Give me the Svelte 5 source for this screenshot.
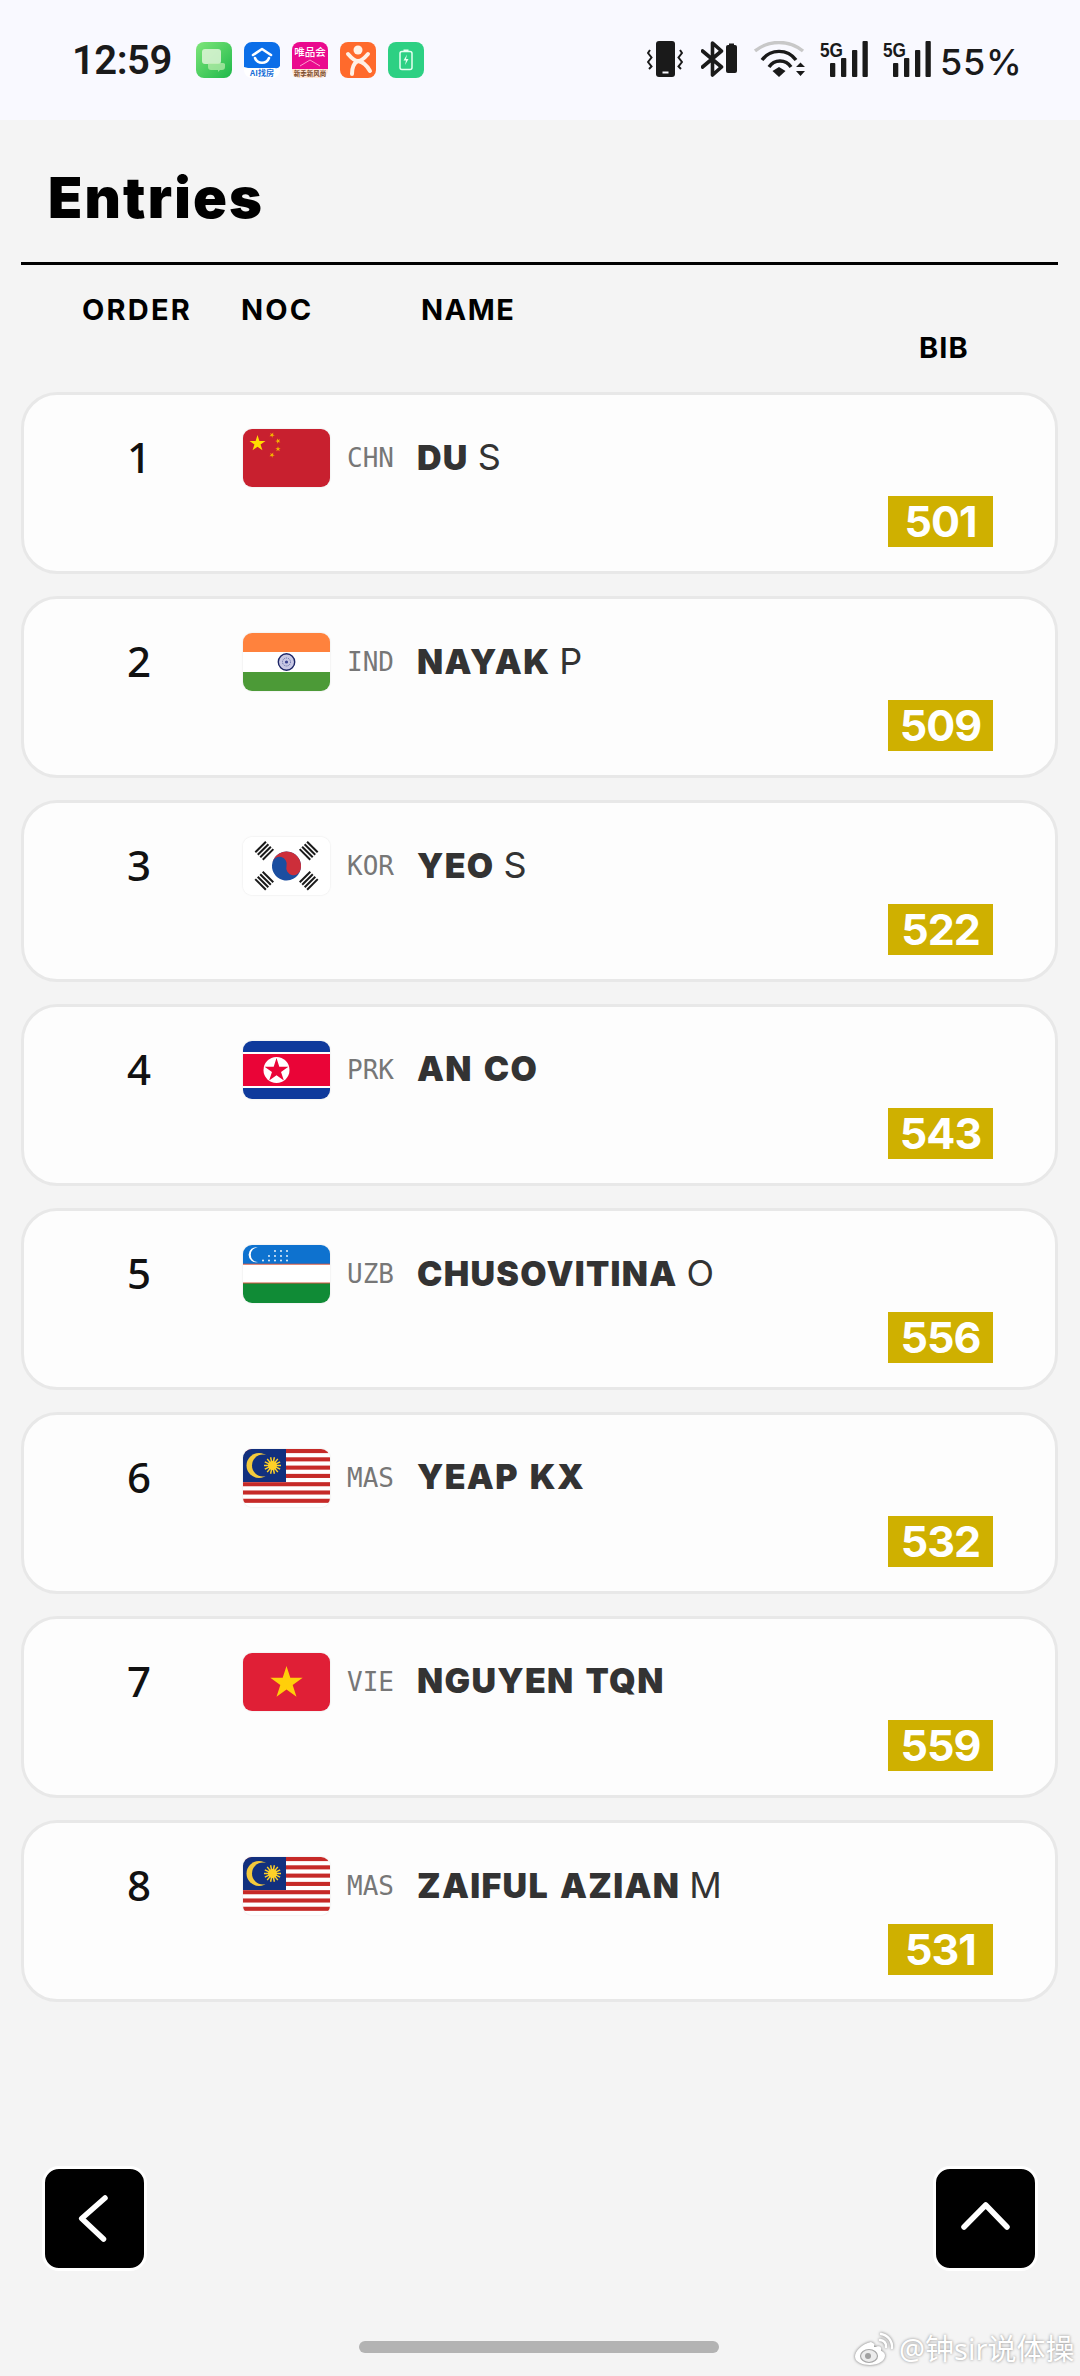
<script>
  const entries = [
    { n: 1, flag: 'chn', code: 'CHN', last: 'DU', first: 'S', bib: 501 },
    { n: 2, flag: 'ind', code: 'IND', last: 'NAYAK', first: 'P', bib: 509 },
    { n: 3, flag: 'kor', code: 'KOR', last: 'YEO', first: 'S', bib: 522 },
    { n: 4, flag: 'prk', code: 'PRK', last: 'AN CO', first: '', bib: 543 },
    { n: 5, flag: 'uzb', code: 'UZB', last: 'CHUSOVITINA', first: 'O', bib: 556 },
    { n: 6, flag: 'mas', code: 'MAS', last: 'YEAP KX', first: '', bib: 532 },
    { n: 7, flag: 'vie', code: 'VIE', last: 'NGUYEN TQN', first: '', bib: 559 },
    { n: 8, flag: 'mas', code: 'MAS', last: 'ZAIFUL AZIAN', first: 'M', bib: 531 }
  ];

  function star(cx, cy, r, rot = 0) {
    const pts = [];
    for (let i = 0; i < 10; i++) {
      const rad = i % 2 === 0 ? r : r * 0.382;
      const a = -Math.PI / 2 + (i * Math.PI) / 5 + rot;
      pts.push(`${(cx + rad * Math.cos(a)).toFixed(2)},${(cy + rad * Math.sin(a)).toFixed(2)}`);
    }
    return pts.join(' ');
  }

  const malaysiaStripes = Array.from({ length: 7 }, (_, i) => i * 8.29);
  const sunRays = Array.from({ length: 14 }, (_, i) => (i * Math.PI) / 7);
  const uzbStars = [
    [28, 6], [34, 6], [40, 6],
    [22, 11], [28, 11], [34, 11], [40, 11],
    [16, 15.5], [22, 15.5], [28, 15.5], [34, 15.5], [40, 15.5]
  ];
  const trigrams = [
    { cx: 21.3, cy: 13.7, rot: -45 },
    { cx: 65.7, cy: 13.7, rot: 45 },
    { cx: 21.3, cy: 43.7, rot: 45 },
    { cx: 65.7, cy: 43.7, rot: -45 }
  ];
</script>

{#snippet flagArt(kind)}
  <svg class="flag-art" viewBox="0 0 87 58" width="87" height="58" aria-hidden="true">
    {#if kind === 'chn'}
      <rect width="87" height="58" fill="#c8202f" />
      <polygon points={star(14.5, 14.5, 8.4)} fill="#ffde00" />
      <polygon points={star(29, 6, 2.8, 0.5)} fill="#f4b400" />
      <polygon points={star(35, 12, 2.8, 0.9)} fill="#f4b400" />
      <polygon points={star(35, 20, 2.8, 0)} fill="#f4b400" />
      <polygon points={star(29, 26, 2.8, 0.5)} fill="#f4b400" />
    {:else if kind === 'ind'}
      <rect width="87" height="20" fill="#ff823d" />
      <rect y="19" width="87" height="20" fill="#ffffff" />
      <rect y="39" width="87" height="19" fill="#4c9a37" />
      <circle cx="43.5" cy="29" r="8.2" fill="#c8c8e4" stroke="#1c2566" stroke-width="1.4" />
      <circle cx="43.5" cy="29" r="4" fill="none" stroke="#5a62a0" stroke-width="1" stroke-dasharray="1 1" />
      <circle cx="43.5" cy="29" r="1.6" fill="#3a4290" />
    {:else if kind === 'kor'}
      <rect width="87" height="58" fill="#ffffff" />
      <g transform="rotate(15 43.5 29)">
        <circle cx="43.5" cy="29" r="14.5" fill="#1b4ea0" />
        <path d="M29 29a14.5 14.5 0 0 1 29 0a7.25 7.25 0 0 1-14.500 0a7.25 7.25 0 0 0-14.500 0z" fill="#cd2e3a" />
      </g>
      {#each trigrams as t}
        <g transform="rotate({t.rot} {t.cx} {t.cy})" stroke="#1a1a1a" stroke-width="2">
          <line x1={t.cx - 7.5} y1={t.cy - 5.2} x2={t.cx + 7.5} y2={t.cy - 5.2} />
          <line x1={t.cx - 7.5} y1={t.cy - 1.7} x2={t.cx + 7.5} y2={t.cy - 1.7} />
          <line x1={t.cx - 7.5} y1={t.cy + 1.8} x2={t.cx + 7.5} y2={t.cy + 1.8} />
          <line x1={t.cx - 7.5} y1={t.cy + 5.3} x2={t.cx + 7.5} y2={t.cy + 5.3} />
        </g>
      {/each}
    {:else if kind === 'prk'}
      <rect width="87" height="58" fill="#0f3a9c" />
      <rect y="11" width="87" height="36" fill="#ffffff" />
      <rect y="13" width="87" height="32" fill="#ea0437" />
      <circle cx="33.500" cy="29" r="13" fill="#ffffff" />
      <polygon points={star(33.5, 29.5, 12.5)} fill="#ea0437" />
    {:else if kind === 'uzb'}
      <rect width="87" height="20" fill="#0e72cf" />
      <rect y="19" width="87" height="20" fill="#ffffff" />
      <rect y="38" width="87" height="20" fill="#108b36" />
      <rect y="18.700" width="87" height="1" fill="#d2553f" />
      <rect y="37.500" width="87" height="1" fill="#d2553f" />
      <path d="M15 2.500a7.500 7.500 0 1 0 0 14.500a6.500 6.500 0 1 1 0-14.500z" fill="#ffffff" />
      {#each uzbStars as s}
        <circle cx={s[0] + 4} cy={s[1]} r="0.9" fill="#ffffff" />
      {/each}
    {:else if kind === 'mas'}
      <rect width="87" height="58" fill="#ffffff" />
      {#each malaysiaStripes as y}
        <rect y={y} width="87" height="4.100" fill="#c62a28" />
      {/each}
      <rect width="43" height="33" fill="#12307e" />
      <circle cx="16" cy="16.500" r="12.500" fill="#f4ca3c" />
      <circle cx="20" cy="16.500" r="11" fill="#12307e" />
      {#each sunRays as a}
        <line x1={29.5 + 2 * Math.cos(a)} y1={16.5 + 2 * Math.sin(a)} x2={29.5 + 8.5 * Math.cos(a)} y2={16.5 + 8.5 * Math.sin(a)} stroke="#fed027" stroke-width="1.5" />
      {/each}
      <circle cx="29.500" cy="16.500" r="4.500" fill="#fed027" />
    {:else if kind === 'vie'}
      <rect width="87" height="58" fill="#e01f36" />
      <polygon points={star(43.5, 30, 17)} fill="#ffcf0a" />
    {/if}
  </svg>
{/snippet}

{#snippet fiveG()}
  <svg class="sig" viewBox="0 0 48 36" width="48" height="36" aria-hidden="true">
    <text x="0" y="15.500" class="fiveg" textLength="23" lengthAdjust="spacingAndGlyphs">5G</text>
    <rect x="10" y="22" width="5.300" height="14" rx="1" />
    <rect x="21" y="17" width="5.300" height="19" rx="1" />
    <rect x="32" y="9" width="5.300" height="27" rx="1" />
    <rect x="42.500" y="0" width="5.300" height="36" rx="1" />
  </svg>
{/snippet}

<div class="page">
  <header class="status">
    <span class="time">12:59</span>
    <div class="apps">
      <svg viewBox="0 0 36 36" width="36" height="36" aria-hidden="true">
        <defs>
          <linearGradient id="msg" x1="0" y1="0" x2="1" y2="1">
            <stop offset="0" stop-color="#7fe67a" />
            <stop offset="1" stop-color="#1eb84a" />
          </linearGradient>
        </defs>
        <rect width="36" height="36" rx="8" fill="url(#msg)" />
        <rect x="6" y="7" width="19" height="15" rx="3" fill="#dff5d8" opacity="0.85" />
        <path d="M12 21h15a3 3 0 0 1 2 1v3a3 3 0 0 1-3 3h-2l-2 2v-2h-7a3 3 0 0 1-3-3z" fill="#bdeeb0" opacity="0.7" />
      </svg>
      <svg viewBox="0 0 36 36" width="36" height="36" aria-hidden="true">
        <rect width="36" height="36" rx="8" fill="#ffffff" />
        <path d="M0 8a8 8 0 0 1 8-8h20a8 8 0 0 1 8 8v16q-2 3-5 2H4l-4-1z" fill="#0b6ee8" />
        <path d="M9 13l9-6 9 6" fill="none" stroke="#fff" stroke-width="2.600" stroke-linecap="round" stroke-linejoin="round" />
        <path d="M11 16a7.500 7.500 0 0 0 14 0" fill="none" stroke="#fff" stroke-width="2.600" stroke-linecap="round" />
        <text x="18" y="34" class="tiny blue" text-anchor="middle">AI找房</text>
      </svg>
      <svg viewBox="0 0 36 36" width="36" height="36" aria-hidden="true">
        <rect width="36" height="36" rx="8" fill="#ffe6d6" />
        <path d="M0 8a8 8 0 0 1 8-8h20a8 8 0 0 1 8 8v19H0z" fill="#ea0a8e" />
        <path d="M8 24l10-6 10 6" fill="none" stroke="#ffc0dc" stroke-width="0.800" />
        <text x="18" y="14" class="vip" text-anchor="middle">唯品会</text>
        <text x="18" y="34" class="tiny brown" text-anchor="middle">新季新风尚</text>
      </svg>
      <svg viewBox="0 0 36 36" width="36" height="36" aria-hidden="true">
        <rect width="36" height="36" rx="8" fill="#ff6a2c" />
        <circle cx="18" cy="8" r="4.500" fill="#fff1e6" />
        <path d="M8 12q6 7 10 7t10-7M18 19q-6 3-6 13M18 19q7 1 12 10" fill="none" stroke="#fff1e6" stroke-width="4" stroke-linecap="round" />
      </svg>
      <svg viewBox="0 0 36 36" width="36" height="36" aria-hidden="true">
        <rect width="36" height="36" rx="8" fill="#2dd083" />
        <rect x="12" y="9.500" width="12" height="18" rx="2" fill="none" stroke="#e5fff0" stroke-width="1.500" />
        <rect x="15.500" y="7.500" width="5" height="2" fill="#e5fff0" />
        <path d="M19 12.500l-3.500 6h2.500l-1 4.500 3.500-6h-2.500z" fill="#e5fff0" />
      </svg>
    </div>
    <div class="sys">
      <svg class="vib" viewBox="0 0 36 36" width="36" height="36" aria-hidden="true">
        <rect x="9" y="0" width="19" height="36" rx="3" fill="#1a1a1a" />
        <rect x="15.500" y="30.500" width="6" height="2" fill="#f9f9ff" />
        <path d="M3 9l-2 3 3.500 4.500L1 21l3.500 4.500L2 28" fill="none" stroke="#1a1a1a" stroke-width="2" />
        <path d="M33 9l2 3-3.500 4.500L35 21l-3.500 4.500L34 28" fill="none" stroke="#1a1a1a" stroke-width="2" />
      </svg>
      <svg class="bt" viewBox="0 0 36 36" width="36" height="36" aria-hidden="true">
        <path d="M1.500 10L20.500 26 11.500 34V2L20.500 10 1.500 26" fill="none" stroke="#1a1a1a" stroke-width="3.600" stroke-linejoin="round" stroke-linecap="round" />
        <rect x="25" y="4" width="11" height="28" rx="2" fill="#1a1a1a" />
        <rect x="28" y="2.500" width="5" height="3" fill="#1a1a1a" />
      </svg>
      <svg class="wifi" viewBox="0 0 51 36" width="51" height="36" aria-hidden="true">
        <path d="M1 10A38 38 0 0 1 49 10" fill="none" stroke="#c8c8c8" stroke-width="3.400" />
        <path d="M8 19A21 21 0 0 1 42 19" fill="none" stroke="#1a1a1a" stroke-width="3.400" />
        <path d="M15 26A13 13 0 0 1 37 26" fill="none" stroke="#1a1a1a" stroke-width="3.400" />
        <path d="M18.500 30L25 26 31.500 30 25 36z" fill="#1a1a1a" />
        <path d="M42 26L46.500 21.500 51 26zM42 30h9l-4.500 5z" fill="#1a1a1a" />
      </svg>
      {@render fiveG()}
      {@render fiveG()}
      <span class="batt">55%</span>
    </div>
  </header>

  <main class="content">
    <h1 class="title">Entries</h1>
    <div class="rule"></div>
    <div class="cols">
      <span class="c-order">ORDER</span>
      <span class="c-noc">NOC</span>
      <span class="c-name">NAME</span>
    </div>
    <div class="bib-head"><span>BIB</span></div>

    <ul class="list">
      {#each entries as e}
        <li class="card">
          <div class="row">
            <span class="num">{e.n}</span>
            <span class="flag">{@render flagArt(e.flag)}</span>
            <span class="code">{e.code}</span>
            <span class="name"><b>{e.last}</b>{#if e.first}<span class="init">{e.first}</span>{/if}</span>
          </div>
          <div class="bib-row"><span class="bib">{e.bib}</span></div>
        </li>
      {/each}
    </ul>

    <nav class="nav">
      <button class="btn" aria-label="Back">
        <svg viewBox="0 0 99 99" width="99" height="99" aria-hidden="true">
          <path d="M60 29L36.700 49.500 58.500 70" fill="none" stroke="#fff" stroke-width="5.500" stroke-linecap="round" stroke-linejoin="round" />
        </svg>
      </button>
      <button class="btn" aria-label="Top">
        <svg viewBox="0 0 99 99" width="99" height="99" aria-hidden="true">
          <path d="M28 58L49.700 36 71 58" fill="none" stroke="#fff" stroke-width="5.500" stroke-linecap="round" stroke-linejoin="round" />
        </svg>
      </button>
    </nav>
    <div class="home"></div>
  </main>

  <div class="mark">
    <svg class="wb" viewBox="0 0 40 34" width="40" height="34" aria-hidden="true">
      <path d="M17 10C8 12 1 19 1 24.500c0 5.500 7 8.500 15 8.500s15-4 15-9.500c0-3-3-4-4-5 1-3-1-5-4-4-2 1-4 1-2.500-2-1-2-2.500-1.500-3.500-2.500z" fill="#fff" />
      <ellipse cx="15" cy="24" rx="8.500" ry="6.500" fill="#ececec" stroke="#a8a8a8" stroke-width="1.200" />
      <circle cx="14" cy="24" r="3" fill="#a0a0a0" />
      <path d="M26 8a6 6 0 0 1 6 7M27 2a13 13 0 0 1 11 14" fill="none" stroke="#fff" stroke-width="2.400" stroke-linecap="round" />
    </svg>
    <span>@钟sir说体操</span>
  </div>
</div>

<style>
  :global(body) {
    margin: 0;
    background: #f4f4f4;
  }
  .page {
    position: relative;
    width: 1080px;
    height: 2376px;
    overflow: hidden;
    background: #f4f4f4;
    font-family: Inter, "Noto Sans", sans-serif;
    color: #000;
  }
  .status {
    display: flex;
    align-items: flex-start;
    box-sizing: border-box;
    height: 120px;
    padding: 41px 62px 0 72px;
    background: #f9f9ff;
  }
  .time {
    width: 98px;
    margin-right: 26px;
    padding-top: 2px;
    font-family: Roboto, Inter, sans-serif;
    font-size: 40px;
    font-weight: 600;
    line-height: 36px;
    letter-spacing: -0.5px;
    color: #1a1a1a;
    white-space: nowrap;
  }
  .apps {
    display: flex;
    gap: 12px;
    margin-top: 1px;
  }
  .apps svg, .sys svg { display: block; flex: none; }
  .tiny { font-family: "Noto Sans CJK SC", sans-serif; font-size: 8px; font-weight: 700; }
  .blue { fill: #1a6fd8; }
  .brown { fill: #7a4a2a; font-size: 6.500px; }
  .vip { font-family: "Noto Sans CJK SC", sans-serif; font-size: 10.500px; font-weight: 500; fill: #fff; }
  .sys {
    display: flex;
    align-items: flex-start;
    margin-left: auto;
    gap: 15px;
  }
  .vib { margin-right: 3px; }
  .bt { margin-right: 2px; }
  .sig { overflow: visible; }
  .fiveg {
    font-family: "Liberation Sans", sans-serif;
    font-size: 21px;
    font-weight: 700;
    fill: #1a1a1a;
  }
  .sig rect { fill: #1a1a1a; }
  .batt {
    margin-left: -6px;
    width: 78px;
    font-size: 36px;
    font-weight: 500;
    line-height: 42px;
    color: #1a1a1a;
    letter-spacing: 0.8px;
    white-space: nowrap;
  }
  .content { padding: 0 22px 0 21px; }
  .title {
    margin: 0;
    padding: 44px 0 0 27px;
    font-size: 56px;
    font-weight: 900;
    line-height: 68px;
    height: 98px;
    letter-spacing: 2.2px;
  }
  .rule { height: 3px; background: #000; }
  .cols {
    display: flex;
    padding: 28px 0 0 61px;
    font-size: 29px;
    font-weight: 700;
    line-height: 33px;
    letter-spacing: 2.2px;
  }
  .c-order { width: 159px; flex: none; }
  .c-noc { width: 180px; flex: none; }
  .c-name { letter-spacing: 1.5px; }
  .bib-head {
    display: flex;
    justify-content: flex-end;
    padding: 5px 89px 0 0;
    font-size: 29px;
    font-weight: 700;
    line-height: 33px;
    letter-spacing: 1.2px;
  }
  .list {
    list-style: none;
    margin: 0;
    padding: 28px 0 0;
    display: flex;
    flex-direction: column;
    gap: 22px;
  }
  .card {
    box-sizing: border-box;
    height: 182px;
    padding: 34px 62px 24px 24px;
    background: #fdfdfd;
    border: 3px solid #e8e8e8;
    border-radius: 36px;
  }
  .row {
    display: flex;
    align-items: center;
    height: 58px;
  }
  .num {
    width: 182px;
    margin-right: 13px;
    text-align: center;
    font-family: "Noto Sans", sans-serif;
    font-size: 42px;
    font-weight: 500;
    color: #111;
    line-height: 58px;
    position: relative;
    top: -1px;
  }
  .flag {
    display: block;
    width: 87px;
    height: 58px;
    border-radius: 9px;
    overflow: hidden;
    margin-right: 17px;
    box-shadow: 0 0 2px rgba(0, 0, 0, 0.12);
  }
  .flag-art { display: block; }
  .code {
    width: 47px;
    margin-right: 23px;
    font-family: "DejaVu Sans Mono", monospace;
    font-size: 26px;
    color: #777;
  }
  .name {
    font-size: 34px;
    color: #333;
    white-space: pre;
    line-height: 58px;
    position: relative;
    top: -1px;
  }
  .name b { font-weight: 900; letter-spacing: 1.3px; word-spacing: 3px; }
  .init { font-size: 36px; font-weight: 400; margin-left: 9px; }
  .bib-row {
    display: flex;
    justify-content: flex-end;
    margin-top: 9px;
  }
  .bib {
    width: 105px;
    height: 51px;
    background: #cfb000;
    color: #fff;
    font-size: 43px;
    font-weight: 700;
    line-height: 51px;
    letter-spacing: -1px;
    text-align: center;
  }
  .nav {
    display: flex;
    justify-content: space-between;
    margin: 164px -1px 0 21px;
    padding-right: 21px;
  }
  .btn {
    box-sizing: content-box;
    width: 99px;
    height: 99px;
    padding: 0;
    background: #000;
    border: 3px solid #fff;
    border-radius: 17px;
  }
  .btn svg { display: block; }
  .home {
    width: 360px;
    height: 12px;
    margin: 70px auto 0;
    position: relative;
    left: -0.5px;
    background: #b3b3b3;
    border-radius: 6px;
  }
  .mark {
    position: absolute;
    left: 854px;
    top: 2331px;
    display: flex;
    align-items: center;
    gap: 5px;
    font-family: "Noto Sans", "Noto Sans CJK SC", sans-serif;
    font-size: 29px;
    line-height: 36px;
    color: #fff;
    text-shadow: 0 0 3px rgba(0, 0, 0, 0.45);
    white-space: nowrap;
  }
  .wb { filter: drop-shadow(0 0 1.5px rgba(0, 0, 0, 0.55)); }
</style>
